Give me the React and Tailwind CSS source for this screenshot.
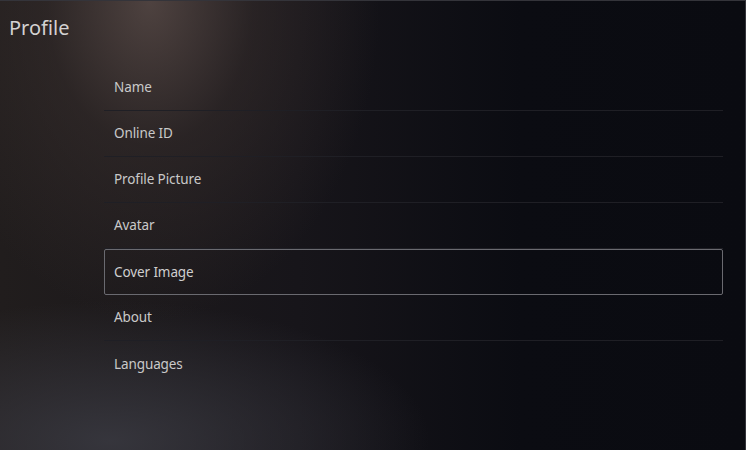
const items = [
  "Name",
  "Online ID",
  "Profile Picture",
  "Avatar",
  "Cover Image",
  "About",
  "Languages",
];

const selected = "Cover Image";

export default function App() {
  return (
    <div
      className="relative h-[450px] w-[746px] overflow-hidden border-t border-r border-[#34343a] bg-[#0b0c12] bg-[radial-gradient(ellipse_230px_320px_at_150px_0px,rgba(95,80,76,0.75),rgba(60,50,48,0.45)_45%,transparent_100%),radial-gradient(ellipse_320px_140px_at_110px_440px,rgba(58,58,66,0.85),transparent_100%),linear-gradient(90deg,#211d1d_0%,#17151a_40%,#0b0c12_70%,#0a0b11_100%)]"
      style={{ fontFamily: '"Noto Sans", "Open Sans", sans-serif' }}
    >
      <h1 className="pl-[9px] pt-[12px] text-[20px] leading-[30px] text-[#d4d2d2]">
        Profile
      </h1>
      <ul className="ml-[104px] mr-[22px] mt-[22px]">
        {items.map((item, i) => {
          const isSel = item === selected;
          const last = i === items.length - 1;
          return (
            <li
              key={item}
              className={
                isSel
                  ? "flex h-[46px] items-center rounded-[2px] border border-[#6a6a70] pl-[9px] text-[13.5px] tracking-[-0.1px] text-[#cfcfcf]"
                  : last
                  ? "flex h-[46px] items-center pl-[10px] text-[13.5px] tracking-[-0.1px] text-[#c9c9c9]"
                  : "flex h-[46px] items-center border-b border-[#1f1f25] pl-[10px] text-[13.5px] tracking-[-0.1px] text-[#c9c9c9]"
              }
            >
              {item}
            </li>
          );
        })}
      </ul>
    </div>
  );
}
